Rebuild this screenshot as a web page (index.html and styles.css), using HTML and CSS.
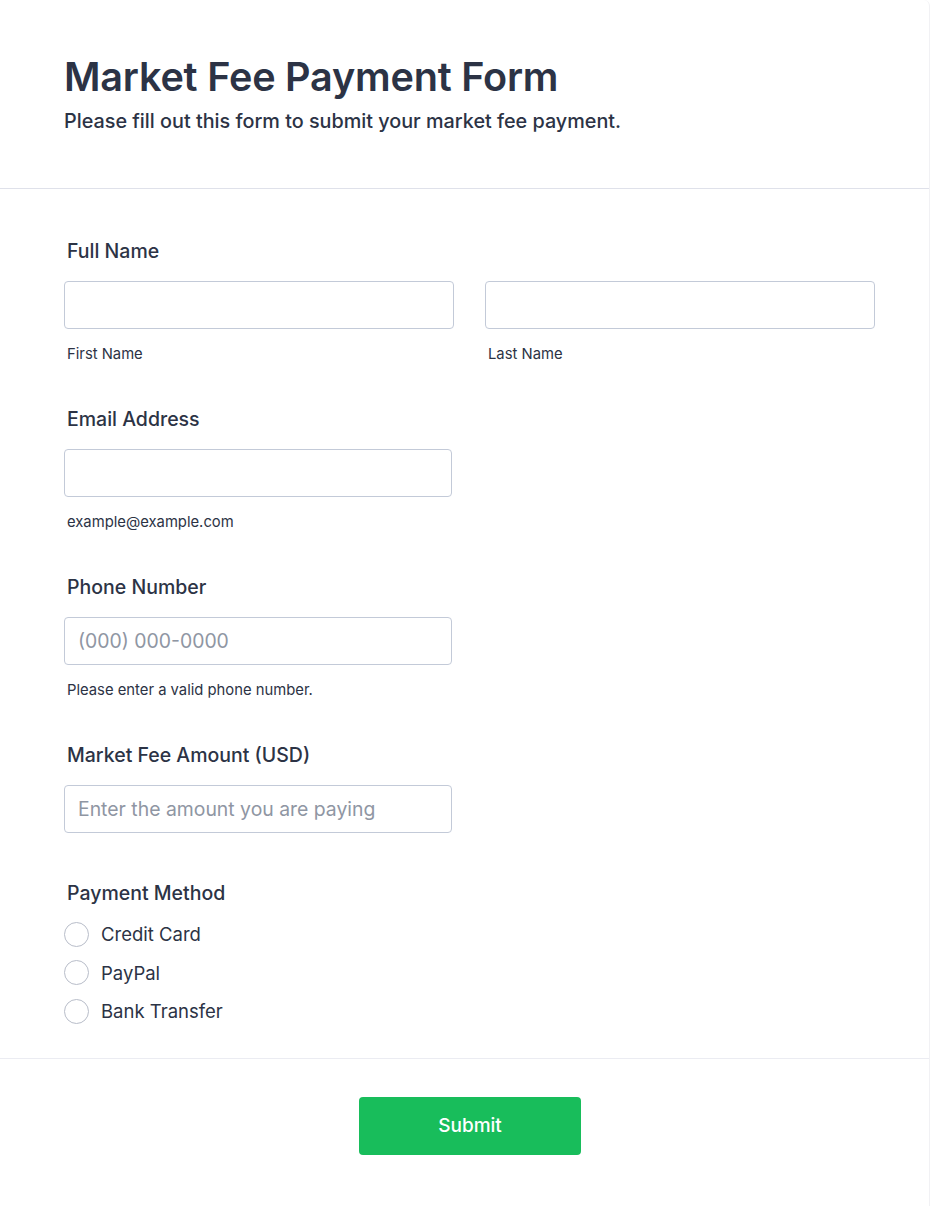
FILE: index.html
```html
<!DOCTYPE html>
<html lang="en">
<head>
<meta charset="utf-8">
<title>Market Fee Payment Form</title>
<link rel="stylesheet" href="styles.css">
</head>
<body>
<div class="card">
  <header class="form-header">
    <h1 class="title">Market Fee Payment Form</h1>
    <p class="subtitle">Please fill out this form to submit your market fee payment.</p>
  </header>
  <form class="form-body">
    <div class="field">
      <label class="label">Full Name</label>
      <div class="name-row">
        <div class="sub-field">
          <input class="input" type="text">
          <span class="sublabel">First Name</span>
        </div>
        <div class="sub-field">
          <input class="input" type="text">
          <span class="sublabel">Last Name</span>
        </div>
      </div>
    </div>
    <div class="field">
      <label class="label">Email Address</label>
      <div class="half">
        <input class="input" type="email">
        <span class="sublabel">example@example.com</span>
      </div>
    </div>
    <div class="field">
      <label class="label">Phone Number</label>
      <div class="half">
        <input class="input" type="tel" placeholder="(000) 000-0000">
        <span class="sublabel">Please enter a valid phone number.</span>
      </div>
    </div>
    <div class="field field-nosub">
      <label class="label">Market Fee Amount (USD)</label>
      <div class="half">
        <input class="input" type="text" placeholder="Enter the amount you are paying">
      </div>
    </div>
    <div class="field field-radio">
      <span class="label label-radio">Payment Method</span>
      <div class="radios">
        <label class="radio"><span class="circle"></span><span class="radio-text">Credit Card</span></label>
        <label class="radio"><span class="circle"></span><span class="radio-text">PayPal</span></label>
        <label class="radio"><span class="circle"></span><span class="radio-text">Bank Transfer</span></label>
      </div>
    </div>
  </form>
  <div class="form-footer">
    <button class="submit" type="button">Submit</button>
  </div>
</div>
</body>
</html>
```

FILE: styles.css
```css
* { box-sizing: border-box; }
html, body { margin: 0; padding: 0; background: #ffffff; }
body {
  font-family: Inter, "Noto Sans", "Liberation Sans", sans-serif;
  color: #2c3345;
}
.card {
  width: 930px;
  min-height: 1206px;
  background: #fff;
  border-right: 1px solid #f1f1f4;
  border-top-right-radius: 6px;
}
.form-header {
  padding: 53px 64px 53px;
  border-bottom: 1px solid #dfe1ea;
}
.title {
  margin: 0;
  font-size: 39.6px;
  line-height: 48px;
  font-weight: 600;
  letter-spacing: -0.2px;
}
.subtitle {
  margin: 6px 0 0;
  font-size: 19.8px;
  line-height: 28px;
  font-weight: 500;
}
.form-body {
  padding: 48px 53px 27px 64px;
  border-bottom: 1px solid #ebecf2;
}
.field { margin-bottom: 41px; }
.field-nosub { margin-bottom: 46px; }
.field-radio { margin-bottom: 0; }
.label {
  display: block;
  padding-left: 3px;
  font-size: 19.5px;
  line-height: 28px;
  font-weight: 500;
  margin-bottom: 16px;
}
.label-radio { margin-bottom: 0; }
.name-row {
  display: grid;
  grid-template-columns: 390px 390px;
  column-gap: 31px;
}
.half { width: 388px; }
.sub-field, .half { display: flex; flex-direction: column; }
.input {
  display: block;
  width: 100%;
  height: 48px;
  border: 1px solid #c3cad8;
  border-radius: 4px;
  padding: 0 13px;
  font-family: inherit;
  font-size: 19.4px;
  font-weight: 400;
  color: #2c3345;
  background: #fff;
  outline: none;
}
.input::placeholder { color: #8f96a3; opacity: 1; }
.sublabel {
  display: block;
  margin-top: 15px;
  padding-left: 3px;
  font-size: 14.8px;
  line-height: 20px;
  color: #2c3345;
}
.radios {
  display: flex;
  flex-direction: column;
  margin-top: 8px;
}
.radio {
  display: flex;
  align-items: center;
  height: 38.5px;
}
.circle {
  width: 25px;
  height: 25px;
  border: 1px solid #b8bdc9;
  border-radius: 50%;
  background: #fff;
  flex: none;
}
.radio-text {
  margin-left: 12px;
  font-size: 18.5px;
  line-height: 28px;
}
.form-footer {
  display: flex;
  justify-content: center;
  padding: 38px 53px 0 64px;
}
.submit {
  width: 222px;
  height: 58px;
  border: none;
  border-radius: 4px;
  background: #18bd5b;
  color: #fff;
  font-family: inherit;
  font-size: 19px;
  font-weight: 500;
  cursor: pointer;
}
```
